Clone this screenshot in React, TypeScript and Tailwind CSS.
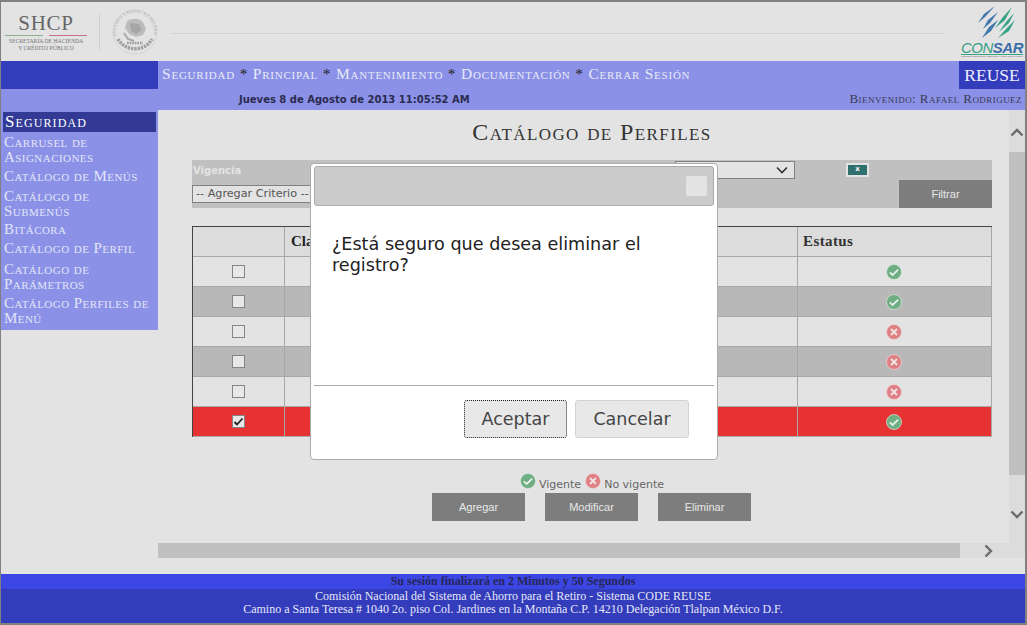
import React from 'react';

const serif = "font-['Liberation_Serif',serif]";
const sc = "font-['Liberation_Serif',serif] [font-variant:small-caps]";

function Ok() {
  return (
    <svg width="16" height="16" viewBox="0 0 16 16" className="block">
      <circle cx="8" cy="8" r="7.5" fill="#6fae82" stroke="#dbe8de" strokeWidth="0.7" />
      <path d="M3.8 8.4l2.8 2.6 5.6-5.4" fill="none" stroke="#e6efe8" strokeWidth="1.8" />
    </svg>
  );
}
function No() {
  return (
    <svg width="16" height="16" viewBox="0 0 16 16" className="block">
      <circle cx="8" cy="8" r="7.5" fill="#df8084" stroke="#eed6d7" strokeWidth="0.7" />
      <path d="M5 5l6 6M11 5l-6 6" fill="none" stroke="#f3e4e4" strokeWidth="1.8" />
    </svg>
  );
}

function Seal() {
  return (
    <svg width="46" height="46" viewBox="0 0 46 46" className="block">
      <defs>
        <path id="sealRing" d="M4.5 27a19 19 0 1 1 37 0" />
      </defs>
      <circle cx="23" cy="23" r="22" fill="none" stroke="#cdcdcd" strokeWidth="0.8" />
      <text fontSize="4.2" fill="#a5a5a5" fontFamily="'Liberation Serif', serif" letterSpacing="0.35">
        <textPath href="#sealRing">ESTADOS UNIDOS MEXICANOS</textPath>
      </text>
      <path d="M15 12c5-3 12-3 16 1l3 7-3 6-7 2-7-3-4-6z" fill="#bcbcbc" />
      <path d="M18 14l9 1 3 6-6 4-5-3z" fill="#a6a6a6" />
      <path d="M12 24l4 6 6 2" fill="none" stroke="#a9a9a9" strokeWidth="2" />
      <path d="M6 30c7 13 27 13 34 0" fill="none" stroke="#a0a0a0" strokeWidth="3.4" strokeDasharray="2.4 0.9" />
      <path d="M15 34h16" stroke="#9a9a9a" strokeWidth="2.4" strokeDasharray="1.6 1" />
    </svg>
  );
}

function ConsarMark() {
  return (
    <svg width="46" height="34" viewBox="0 0 46 34" className="block">
      <path d="M20 1L9 9 3 18l7-6z" fill="#4277ad" />
      <path d="M23 7L13 15 8 24l7-6z" fill="#4277ad" />
      <path d="M23 15L14 22 7 33l9-7z" fill="#4277ad" />
      <path d="M37 2L28 12 20 23l10-8z" fill="#35a286" />
      <path d="M39 8L31 17 24 27l10-9z" fill="#35a286" />
      <path d="M40 15L31 24 23 33l11-7z" fill="#35a286" />
    </svg>
  );
}

const menuItems = [
  { t: 'Carrusel de Asignaciones', m: 'mt-0' },
  { t: 'Catálogo de Menús', m: 'mt-[4px]' },
  { t: 'Catálogo de Submenús', m: 'mt-[5px]' },
  { t: 'Bitácora', m: 'mt-[3px]' },
  { t: 'Catálogo de Perfil', m: 'mt-[4px]' },
  { t: 'Catálogo de Parámetros', m: 'mt-[6px]' },
  { t: 'Catálogo Perfiles de Menú', m: 'mt-[4px]' },
];
const rows = [
  { bg: 'bg-[#e3e3e3]', ok: true },
  { bg: 'bg-[#b8b8b8]', ok: true },
  { bg: 'bg-[#e3e3e3]', ok: false },
  { bg: 'bg-[#b8b8b8]', ok: false },
  { bg: 'bg-[#e3e3e3]', ok: false },
  { bg: 'bg-[#e63232]', ok: true, checked: true },
];

function GrayButton({ children }: { children: React.ReactNode }) {
  return (
    <div className="w-[93px] h-[28px] bg-[#7d7d7d] text-[#e8e8e8] flex items-center justify-center text-[11px] font-['Liberation_Sans',sans-serif]">
      {children}
    </div>
  );
}

export default function App() {
  return (
    <div className="relative w-[1027px] h-[625px] overflow-hidden bg-[#e3e3e3] border-t-2 border-b-2 border-l border-r-2 border-[#808080] flex flex-col font-['DejaVu_Sans',sans-serif]">
      {/* Header */}
      <div className="h-[59px] flex items-center shrink-0">
        <div className="w-[88px] pl-[2px] flex flex-col items-center pt-[1px]">
          <div className={`${serif} text-[21px] leading-[20px] text-[#666] tracking-[0.7px]`}>SHCP</div>
          <div className="flex gap-[6px] w-[82px] mt-[2px] mb-[2px]">
            <div className="h-[1px] flex-1 bg-[#88b590]" />
            <div className="h-[1px] flex-1 bg-[#c4728a]" />
          </div>
          <div className={`${serif} text-[5.7px] leading-[7px] text-[#777] text-center whitespace-nowrap`}>SECRETARÍA DE HACIENDA<br />Y CRÉDITO PÚBLICO</div>
        </div>
        <div className="w-[1px] h-[36px] bg-[#cfcfcf] ml-[10px] mr-[12px]" />
        <Seal />
        <div className="h-[1px] w-[774px] bg-[#d2d2d2] ml-[13px] mt-[4px]" />
        <div className="ml-auto w-[66px] self-start pt-[3px] flex flex-col items-center overflow-hidden">
          <div className="self-start ml-[16px]"><ConsarMark /></div>
          <div className="mt-[2px] font-['Liberation_Sans',sans-serif] text-[15px] leading-[13px] text-[#36a184] italic tracking-[-0.5px] border-b border-[#36a184] whitespace-nowrap">
            CON<span className="font-bold text-[#3e6ea8]">SAR</span>
          </div>
          <div className="font-['Liberation_Sans',sans-serif] text-[2.5px] leading-[4px] text-[#666] whitespace-nowrap">Comisión Nacional del Sistema de Ahorro para el Retiro</div>
        </div>
      </div>

      {/* Nav */}
      <div className="h-[49px] shrink-0 bg-[#8a91e6] flex flex-col">
        <div className="h-[28px] flex">
          <div className="w-[157px] bg-[#333cba]" />
          <div className={`${sc} pl-[4px] flex-1 flex items-center text-[15.5px] tracking-[0.77px] text-[#e8eaf8] whitespace-pre pb-[2px]`}>
            Seguridad <span className="text-[#222]">*</span> Principal <span className="text-[#222]">*</span> Mantenimiento <span className="text-[#222]">*</span> Documentación <span className="text-[#222]">*</span> Cerrar Sesión
          </div>
          <div className={`${serif} w-[66px] bg-[#333cba] text-[#eef] text-[17.5px] flex items-center justify-center`}>REUSE</div>
        </div>
        <div className="h-[21px] flex items-center relative">
          <div className="w-[238px]" />
          <div className="font-bold text-[10px] text-[#2b2b50] whitespace-nowrap">Jueves 8 de Agosto de 2013 11:05:52 AM</div>
          <div className={`${sc} ml-auto pr-[3px] pb-[2px] text-[13px] tracking-[0.45px] text-[#3a3a55] whitespace-nowrap`}>Bienvenido: Rafael Rodriguez</div>
        </div>
      </div>

      {/* Body */}
      <div className="h-[464px] shrink-0 flex">
        <div className={`${sc} w-[157px] h-[220px] shrink-0 bg-[#8a91e6] text-[#e2e5f8] text-[15px] tracking-[0.45px] pt-[2px]`}>
          <div className="ml-[2px] mr-[2px] h-[20px] bg-[#323a96] text-white text-[17px] tracking-[1.1px] leading-[20px] pl-[2px]">Seguridad</div>
          <div className="pl-[3px] pt-[3px] pr-[2px]">
            {menuItems.map((m) => (
              <div key={m.t} className={`leading-[15px] ${m.m}`}>{m.t}</div>
            ))}
          </div>
        </div>

        <div className="flex-1 flex flex-col min-w-0">
          <div className="flex h-[433px]">
            {/* Content */}
            <div className="flex-1 relative flex flex-col items-start pl-[34px]">
              <div className={`${sc} w-[800px] text-center text-[24px] leading-[26px] tracking-[1.4px] text-[#333] pt-[9px]`}>Catálogo de Perfiles</div>
              <div className="w-[800px] h-[48px] bg-[#c0c0c0] mt-[15px] flex flex-col relative">
                <div className="h-[20px] flex items-center">
                  <span className="text-[10px] font-bold text-[#e3e3e3] pl-[1px]">Vigencia</span>
                  <div className="ml-auto mr-[197px] w-[120px] h-[18px] bg-[#e3e3e3] border border-[#808080] flex items-center justify-end pr-[6px]">
                    <svg width="12" height="8" viewBox="0 0 12 8"><path d="M1 1.5l5 5 5-5" fill="none" stroke="#333" strokeWidth="1.6" /></svg>
                  </div>
                  <div className="absolute right-[123px] top-[3px] w-[23px] h-[14px] border-2 border-[#e3e3e3] bg-[#2f6f6e] text-white text-[7px] leading-[9px] text-center font-bold">x</div>
                </div>
                <div className="flex-1 flex">
                  <div className="mt-[5px] w-[125px] h-[18px] bg-[#e3e3e3] border border-[#808080] text-[11.2px] leading-[16px] text-[#555] px-[3px] whitespace-nowrap overflow-hidden">-- Agregar Criterio --</div>
                  <div className="ml-auto"><GrayButton>Filtrar</GrayButton></div>
                </div>
              </div>

              <div className="w-[800px] mt-[18px] border-t border-l border-[#444]">
                <div className="h-[30px] bg-[#dcdcdc] flex border-b border-[#a8a8a8]">
                  <div className="w-[92px] border-r border-[#a8a8a8]" />
                  <div className={`${serif} pl-[6px] flex-1 flex items-center font-bold text-[15px] text-[#222] border-r border-[#a8a8a8]`}>Clave</div>
                  <div className={`${serif} w-[194px] pl-[5px] flex items-center font-bold text-[15px] text-[#333] tracking-[0.4px] border-r border-[#a8a8a8]`}>Estatus</div>
                </div>
                {rows.map((r, i) => (
                  <div key={i} className={`h-[30px] flex border-b border-[#a8a8a8] ${r.bg}`}>
                    <div className="w-[92px] border-r border-[#a8a8a8] flex items-center justify-center pr-[1px]">
                      <div className="w-[13px] h-[13px] bg-[#e8e8e8] border border-[#858585] flex items-center justify-center">
                        {r.checked && (
                          <svg width="11" height="11" viewBox="0 0 11 11"><path d="M1.5 6l2.5 2.5L9.5 2.5" fill="none" stroke="#222" strokeWidth="1.8" /></svg>
                        )}
                      </div>
                    </div>
                    <div className="flex-1 border-r border-[#a8a8a8]" />
                    <div className="w-[194px] border-r border-[#a8a8a8] flex items-center justify-center pr-[1px]">
                      {r.ok ? <Ok /> : <No />}
                    </div>
                  </div>
                ))}
              </div>

              <div className="w-[800px] flex justify-center items-end mt-[36px] text-[11px] leading-[13px] text-[#666]">
                <div className="mb-[2px] mr-[3px]"><Ok /></div><span className="mr-[4px]">Vigente</span>
                <div className="mb-[2px] mr-[3px]"><No /></div><span>No vigente</span>
              </div>
              <div className="w-[800px] flex justify-center gap-[20px] mt-[2px] pr-[1px]">
                <GrayButton>Agregar</GrayButton>
                <GrayButton>Modificar</GrayButton>
                <GrayButton>Eliminar</GrayButton>
              </div>
            </div>
            {/* Vertical scrollbar */}
            <div className="w-[16px] shrink-0 flex flex-col bg-[#dcdcdc]">
              <div className="h-[42px] flex items-center justify-center pt-[2px]">
                <svg width="14" height="9" viewBox="0 0 14 9"><path d="M1.5 7.5L7 2l5.5 5.5" fill="none" stroke="#6b6b6b" strokeWidth="2.4" /></svg>
              </div>
              <div className="h-[323px] bg-[#c0c0c0]" />
              <div className="flex-1 flex items-center justify-center pt-[11px]">
                <svg width="14" height="9" viewBox="0 0 14 9"><path d="M1.5 1.5L7 7l5.5-5.5" fill="none" stroke="#6b6b6b" strokeWidth="2.4" /></svg>
              </div>
            </div>
          </div>
          {/* Horizontal scrollbar */}
          <div className="h-[15px] flex bg-[#dcdcdc]">
            <div className="w-[802px] bg-[#c0c0c0]" />
            <div className="w-[49px] flex items-center justify-center pl-[7px]">
              <svg width="9" height="14" viewBox="0 0 9 14"><path d="M1.5 1.5L7 7l-5.5 5.5" fill="none" stroke="#6b6b6b" strokeWidth="2.4" /></svg>
            </div>
          </div>
        </div>
      </div>

      {/* Footer */}
      <div className={`${serif} flex-1 flex flex-col text-[12px]`}>
        <div className="h-[15px] bg-[#3c46e3] text-[#26265a] font-bold text-center leading-[15px]">Su sesión finalizará en 2 Minutos y 50 Segundos</div>
        <div className="flex-1 bg-[#333cba] text-[#e6e8fa] text-center leading-[13px] pt-[1px]">
          <div>Comisión Nacional del Sistema de Ahorro para el Retiro - Sistema CODE REUSE</div>
          <div>Camino a Santa Teresa # 1040 2o. piso Col. Jardines en la Montaña C.P. 14210 Delegación Tlalpan México D.F.</div>
        </div>
      </div>

      {/* Modal */}
      <div className="absolute left-[309px] top-[161px] w-[408px] h-[297px] bg-white border border-[#aaa] rounded-[4px] flex flex-col">
        <div className="mx-[3px] mt-[2px] h-[40px] shrink-0 bg-[#cbcbcb] border border-[#aaa] rounded-[3px] flex items-center justify-end pr-[6px]">
          <div className="w-[21px] h-[20px] bg-[#e3e3e3] rounded-[2px]" />
        </div>
        <div className="px-[21px] pt-[28px] text-[17.6px] leading-[21px] text-[#222] h-[179px] shrink-0">¿Está seguro que desea eliminar el registro?</div>
        <div className="mx-[3px] h-[1px] bg-[#aaa] shrink-0" />
        <div className="flex justify-end gap-[8px] pt-[14px] pr-[28px]">
          <div className="w-[103px] h-[38px] pt-[1px] bg-[#e8e8e8] border border-dotted border-[#222] rounded-[3px] flex items-center justify-center text-[17.5px] text-[#454545]">Aceptar</div>
          <div className="w-[114px] h-[38px] pt-[1px] bg-[#e8e8e8] border border-[#d3d3d3] rounded-[3px] flex items-center justify-center text-[17.5px] text-[#454545]">Cancelar</div>
        </div>
      </div>
    </div>
  );
}
